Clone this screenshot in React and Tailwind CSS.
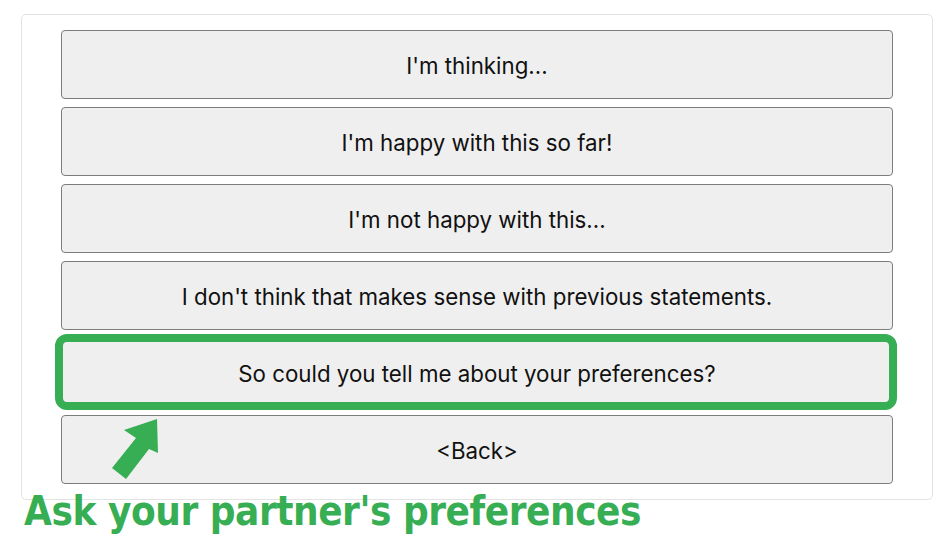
import React from 'react'

const options = [
  "I'm thinking...",
  "I'm happy with this so far!",
  "I'm not happy with this...",
  "I don't think that makes sense with previous statements.",
  'So could you tell me about your preferences?',
  '<Back>',
]

const App = () => {
  return (
    <div className="w-[945px] h-[560px] bg-white overflow-hidden pt-[14px] pl-[21px]">
      <div className="w-[912px] border border-[#e3e3e3] rounded-[5px] pt-[15px] pb-[15px] px-[39px] flex flex-col gap-[8px]">
        {options.map((text, i) => (
          <div key={i} className="relative">
            <button
              className="w-full h-[69px] bg-[#efefef] border border-[#7d7d7d] rounded-[4px] pt-[2px] text-[22.3px] text-[#111]"
              style={{ fontFamily: 'Inter, "Liberation Sans", Arial, sans-serif' }}
            >
              {text}
            </button>
            {i === 4 && (
              <div className="absolute top-[-4px] bottom-[-3px] left-[-6px] right-[-4px] border-[8px] border-[#37ae53] rounded-[12px] pointer-events-none" />
            )}
            {i === 5 && (
              <svg className="absolute left-[50px] top-[3px]" width="50" height="66" viewBox="0 0 50 66">
                <polygon
                  points="46,1 13,12 25,20 1,50 15,61 38,31 47,35"
                  fill="#37ae53"
                />
              </svg>
            )}
          </div>
        ))}
      </div>
      <div
        className="mt-[-9px] ml-[3px] text-[40px] leading-none font-bold text-[#37ae53] tracking-[-0.45px] [font-stretch:condensed]"
        style={{ fontFamily: '"DejaVu Sans Condensed", "DejaVu Sans", Verdana, sans-serif' }}
      >
        Ask your partner's preferences
      </div>
    </div>
  )
}

export default App
